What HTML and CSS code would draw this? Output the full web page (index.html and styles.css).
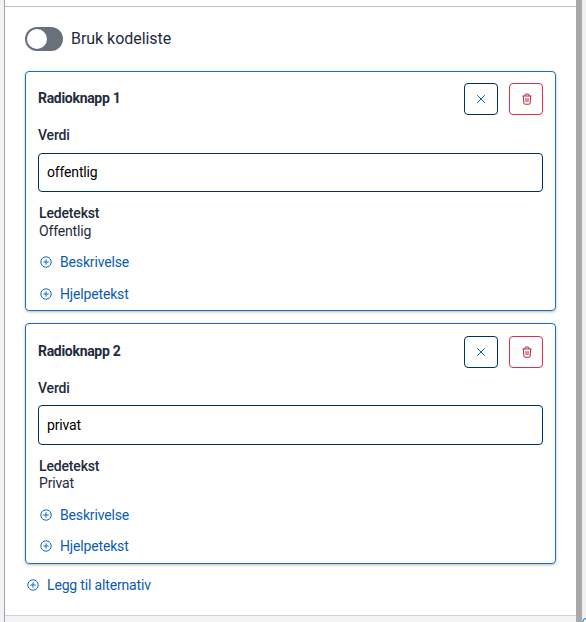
FILE: index.html
```html
<!DOCTYPE html>
<html lang="nb">
<head>
<meta charset="utf-8">
<title>Radioknapper</title>
<link rel="stylesheet" href="styles.css">
</head>
<body>
<svg class="sprite" aria-hidden="true">
  <symbol id="plus" viewBox="0 0 12 12"><circle cx="6" cy="6" r="5.2"/><path d="M6 3.3v5.4M3.3 6h5.4"/></symbol>
  <symbol id="close" viewBox="0 0 10 10"><path d="M1.2 1.2l7.6 7.6M8.8 1.2L1.2 8.8"/></symbol>
  <symbol id="trash" viewBox="0 0 10 12"><path d="M.5 3h9M3 3V1.9Q3 1 4 1h2q1 0 1 .9V3M1.3 3.2l.6 7q.1 1 1 1h4.2q.9 0 1-1l.6-7M3.9 5l.2 4M6.1 5l-.2 4"/></symbol>
</svg>
<div class="app">
  <main class="panel">
    <div class="top"></div>
    <div class="content">
      <label class="toggle"><span class="track"><span class="knob"></span></span>Bruk kodeliste</label>
      <section class="card">
        <header class="head">
          <h2>Radioknapp 1</h2>
          <button class="square close" aria-label="Lukk"><svg><use href="#close"/></svg></button>
          <button class="square delete" aria-label="Slett"><svg><use href="#trash"/></svg></button>
        </header>
        <label class="label" for="v1">Verdi</label>
        <input id="v1" class="field" value="offentlig">
        <div class="text"><b>Ledetekst</b><span>Offentlig</span></div>
        <button class="link"><svg><use href="#plus"/></svg>Beskrivelse</button>
        <button class="link"><svg><use href="#plus"/></svg>Hjelpetekst</button>
      </section>
      <section class="card second">
        <header class="head">
          <h2>Radioknapp 2</h2>
          <button class="square close" aria-label="Lukk"><svg><use href="#close"/></svg></button>
          <button class="square delete" aria-label="Slett"><svg><use href="#trash"/></svg></button>
        </header>
        <label class="label" for="v2">Verdi</label>
        <input id="v2" class="field" value="privat">
        <div class="text"><b>Ledetekst</b><span>Privat</span></div>
        <button class="link"><svg><use href="#plus"/></svg>Beskrivelse</button>
        <button class="link"><svg><use href="#plus"/></svg>Hjelpetekst</button>
      </section>
      <button class="link add"><svg><use href="#plus"/></svg>Legg til alternativ</button>
    </div>
    <div class="bottom"></div>
  </main>
  <div class="scrollbar"></div>
  <aside class="edge"><span class="node"></span></aside>
</div>
</body>
</html>
```
FILE: styles.css
```css
* { box-sizing: border-box; }
body { margin: 0; font: 14px/18px Roboto, sans-serif; letter-spacing: -.16px; color: #1e2b3c; background: #f1f2f4; overflow: hidden; }
.sprite { display: none; }
.app { display: flex; height: 622px; padding-left: 4px; }
.panel { flex: 1; display: flex; flex-direction: column; border-left: 1px solid #a0a2a7; background: #fff; }
.top { height: 7px; border-bottom: 1px solid #bcbec4; }
.content { flex: 1; padding: 20px 20px 0; }
.bottom { height: 7px; border-top: 1px solid #d0d2d5; background: #f3f4f5; }
.scrollbar { width: 6px; background: #a9a9a9; }
.edge { position: relative; width: 4px; background: #f0f0f0; overflow: hidden; }
.node { position: absolute; left: 0; top: 618px; width: 9px; height: 9px; border: 1px solid #0062ba; border-radius: 50%; background: #fff; }
.toggle { display: flex; align-items: center; gap: 8px; height: 24px; margin-bottom: 20px; font-size: 16px; letter-spacing: -.04px; }
.track { width: 38px; height: 24px; padding: 2px; border-radius: 12px; background: #68707c; }
.knob { display: block; width: 20px; height: 20px; border-radius: 50%; background: #fff; }
.card { display: flex; flex-direction: column; align-items: flex-start; height: 240px; padding: 11px 12px 0; border: 1px solid #1a6fb8; border-radius: 4px; box-shadow: 0 1px 3px rgba(0, 0, 0, .28); }
.second { height: 241px; margin-top: 12px; padding-top: 12px; }
.head { display: flex; align-self: stretch; align-items: center; height: 32px; }
h2 { flex: 1; margin: -2px 0 0; font: 700 14px/18px Roboto, sans-serif; letter-spacing: -.3px; }
button { font: inherit; letter-spacing: inherit; background: none; cursor: pointer; }
.square { display: flex; align-items: center; justify-content: center; width: 34px; height: 32px; padding: 0; border: 1px solid #00315d; border-radius: 4px; color: #0062ba; }
.delete { margin-left: 11px; border-color: #e02e49; color: #b8253c; }
svg { display: block; fill: none; stroke: currentColor; stroke-width: 1; }
.close svg { width: 10px; height: 10px; }
.delete svg { width: 10px; height: 12px; margin-left: 1px; }
.label { margin-top: 11px; font-weight: 500; }
.field { width: 100%; height: 39px; margin: 9px 0 12px; padding: 0 8px 1px; border: 1px solid #00315d; border-radius: 4px; font: 14px Roboto, sans-serif; letter-spacing: -.16px; color: #000; outline: 0; }
.second .field { height: 40px; margin-top: 8px; }
.text { display: flex; flex-direction: column; height: 36px; margin-left: 1px; }
.text b { font-weight: 500; }
.second .text span { margin-top: -1px; }
.link { display: flex; align-items: center; gap: 8px; height: 18px; margin: 13px 0 0 2px; padding: 0; border: 0; color: #0b5cad; }
.link + .link { margin-top: 14px; }
.second .link + .link { margin-top: 13px; }
.link svg { width: 12px; height: 12px; color: #1268b8; }
.link.add { margin: 12px 0 0 2px; }
```
